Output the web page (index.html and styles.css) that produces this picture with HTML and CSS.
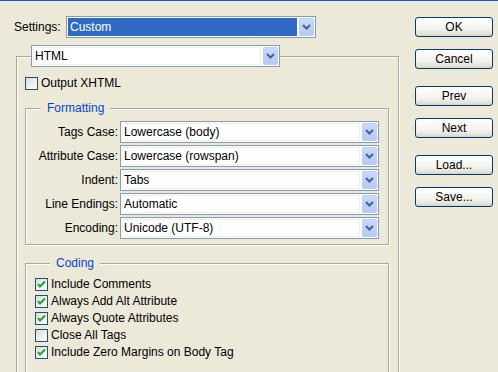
FILE: index.html
```html
<!DOCTYPE html>
<html>
<head>
<meta charset="utf-8">
<link rel="stylesheet" href="styles.css">
</head>
<body>
<div class="dialog">
  <div class="left">
    <div class="settings-row">
      <span class="settings-label">Settings:</span>
      <div class="combo settings-combo">
        <div class="field selected">Custom</div>
        <div class="arrow"><svg width="9" height="6" viewBox="0 0 9 6"><polyline points="1,1 4.5,4.5 8,1" fill="none" stroke="#4d6185" stroke-width="2"/></svg></div>
      </div>
    </div>
    <fieldset class="group main-group">
      <legend class="combo-legend">
        <div class="combo html-combo">
          <div class="field">HTML</div>
          <div class="arrow"><svg width="9" height="6" viewBox="0 0 9 6"><polyline points="1,1 4.5,4.5 8,1" fill="none" stroke="#4d6185" stroke-width="2"/></svg></div>
        </div>
      </legend>
      <label class="check-row xhtml">
        <span class="cb"></span><span>Output XHTML</span>
      </label>
      <fieldset class="group formatting">
        <legend class="text-legend">Formatting</legend>
        <div class="form-grid">
          <span class="lbl">Tags Case:</span>
          <div class="combo"><div class="field">Lowercase (body)</div><div class="arrow"><svg width="9" height="6" viewBox="0 0 9 6"><polyline points="1,1 4.5,4.5 8,1" fill="none" stroke="#4d6185" stroke-width="2"/></svg></div></div>
          <span class="lbl">Attribute Case:</span>
          <div class="combo"><div class="field">Lowercase (rowspan)</div><div class="arrow"><svg width="9" height="6" viewBox="0 0 9 6"><polyline points="1,1 4.5,4.5 8,1" fill="none" stroke="#4d6185" stroke-width="2"/></svg></div></div>
          <span class="lbl">Indent:</span>
          <div class="combo"><div class="field">Tabs</div><div class="arrow"><svg width="9" height="6" viewBox="0 0 9 6"><polyline points="1,1 4.5,4.5 8,1" fill="none" stroke="#4d6185" stroke-width="2"/></svg></div></div>
          <span class="lbl">Line Endings:</span>
          <div class="combo"><div class="field">Automatic</div><div class="arrow"><svg width="9" height="6" viewBox="0 0 9 6"><polyline points="1,1 4.5,4.5 8,1" fill="none" stroke="#4d6185" stroke-width="2"/></svg></div></div>
          <span class="lbl">Encoding:</span>
          <div class="combo"><div class="field">Unicode (UTF-8)</div><div class="arrow"><svg width="9" height="6" viewBox="0 0 9 6"><polyline points="1,1 4.5,4.5 8,1" fill="none" stroke="#4d6185" stroke-width="2"/></svg></div></div>
        </div>
      </fieldset>
      <fieldset class="group coding">
        <legend class="text-legend">Coding</legend>
        <div class="checks">
          <label class="check-row"><span class="cb checked"><svg width="11" height="11" viewBox="0 0 11 11"><polyline points="2,5 4,7.5 9,2.5" fill="none" stroke="#21a121" stroke-width="2"/></svg></span><span>Include Comments</span></label>
          <label class="check-row"><span class="cb checked"><svg width="11" height="11" viewBox="0 0 11 11"><polyline points="2,5 4,7.5 9,2.5" fill="none" stroke="#21a121" stroke-width="2"/></svg></span><span>Always Add Alt Attribute</span></label>
          <label class="check-row"><span class="cb checked"><svg width="11" height="11" viewBox="0 0 11 11"><polyline points="2,5 4,7.5 9,2.5" fill="none" stroke="#21a121" stroke-width="2"/></svg></span><span>Always Quote Attributes</span></label>
          <label class="check-row"><span class="cb"></span><span>Close All Tags</span></label>
          <label class="check-row"><span class="cb checked"><svg width="11" height="11" viewBox="0 0 11 11"><polyline points="2,5 4,7.5 9,2.5" fill="none" stroke="#21a121" stroke-width="2"/></svg></span><span>Include Zero Margins on Body Tag</span></label>
        </div>
      </fieldset>
    </fieldset>
  </div>
  <div class="buttons">
    <button class="btn">OK</button>
    <button class="btn">Cancel</button>
    <button class="btn gap">Prev</button>
    <button class="btn">Next</button>
    <button class="btn gap">Load...</button>
    <button class="btn">Save...</button>
  </div>
</div>
</body>
</html>
```
FILE: styles.css
```css
html, body {
  margin: 0;
  padding: 0;
}
body {
  background: #ece9d8;
  border-top: 1px solid #0a5ce6;
  height: 371px;
  overflow: hidden;
  font-family: "Liberation Sans", Arial, sans-serif;
  font-size: 12px;
  color: #000;
}
.dialog {
  display: flex;
  align-items: flex-start;
}
.left {
  width: 400px;
  flex: none;
}
.settings-row {
  display: flex;
  align-items: center;
  margin: 15px 0 0 14px;
  height: 22px;
}
.settings-label {
  width: 52px;
  flex: none;
}
.combo {
  box-sizing: border-box;
  height: 22px;
  border: 1px solid #7f9db9;
  background: #fff;
  display: flex;
  align-items: stretch;
  padding: 1px;
}
.combo .field {
  flex: 1;
  border: 1px solid #f1efe2;
  margin-right: 2px;
  padding-left: 1px;
  line-height: 16px;
  white-space: nowrap;
  overflow: hidden;
}
.combo .field.selected {
  background: #316ac5;
  border-color: #316ac5;
  color: #fff;
}
.combo .arrow {
  width: 15px;
  flex: none;
  background: linear-gradient(#c9daff, #b3c9f7);
  border-radius: 2px;
  display: flex;
  align-items: center;
  justify-content: center;
  box-shadow: inset 0 0 0 1px #bccff9;
}
.settings-combo {
  width: 250px;
}
.group {
  margin: 0;
  padding: 0;
  border: 1px solid #aca899;
  box-shadow: inset 1px 1px 0 #fff, 1px 1px 0 #fff;
  min-width: 0;
}
.main-group {
  margin: 7px 0 0 16px;
  width: 383px;
  box-sizing: border-box;
  height: 327px;
  border-bottom: none;
}
.combo-legend {
  padding: 0;
  margin-left: 14px;
}
.html-combo {
  width: 249px;
}
.check-row {
  display: flex;
  align-items: center;
  height: 13px;
  line-height: 13px;
  gap: 3px;
  white-space: nowrap;
}
.xhtml {
  margin: 10px 0 0 8px;
}
.cb {
  box-sizing: border-box;
  width: 13px;
  height: 13px;
  border: 1px solid #1c5180;
  background: linear-gradient(135deg, #dcdcd7, #ffffff);
  display: flex;
  align-items: center;
  justify-content: center;
  flex: none;
}
.cb svg {
  display: block;
}
.text-legend {
  color: #0046d5;
  background: #ece9d8;
  padding: 0 6px;
  margin-left: 15px;
  line-height: 14px;
}
.formatting {
  margin: 11px 0 0 8px;
  width: 364px;
  box-sizing: border-box;
  padding: 6px 0 5px 0;
}
.form-grid {
  display: grid;
  grid-template-columns: 92px 259px;
  column-gap: 2px;
  row-gap: 2px;
  align-items: center;
}
.lbl {
  text-align: right;
  white-space: nowrap;
}
.coding {
  margin: 11px 0 0 8px;
  width: 364px;
  box-sizing: border-box;
  padding: 8px 0 0 9px;
  height: 116px;
  border-bottom: none;
}
.checks {
  display: flex;
  flex-direction: column;
  gap: 4px;
}
.buttons {
  display: flex;
  flex-direction: column;
  margin: 16px 0 0 15px;
  gap: 12px;
}
.btn {
  box-sizing: border-box;
  width: 78px;
  height: 20px;
  border: 1px solid #003c74;
  border-radius: 3px;
  background: linear-gradient(#ffffff, #f4f3ee 60%, #e3e0d5 90%, #d6d0c5);
  font-family: "Liberation Sans", Arial, sans-serif;
  font-size: 12px;
  font-weight: normal;
  color: #000;
  padding: 0;
  line-height: 18px;
}
.btn.gap {
  margin-top: 5px;
}
```
